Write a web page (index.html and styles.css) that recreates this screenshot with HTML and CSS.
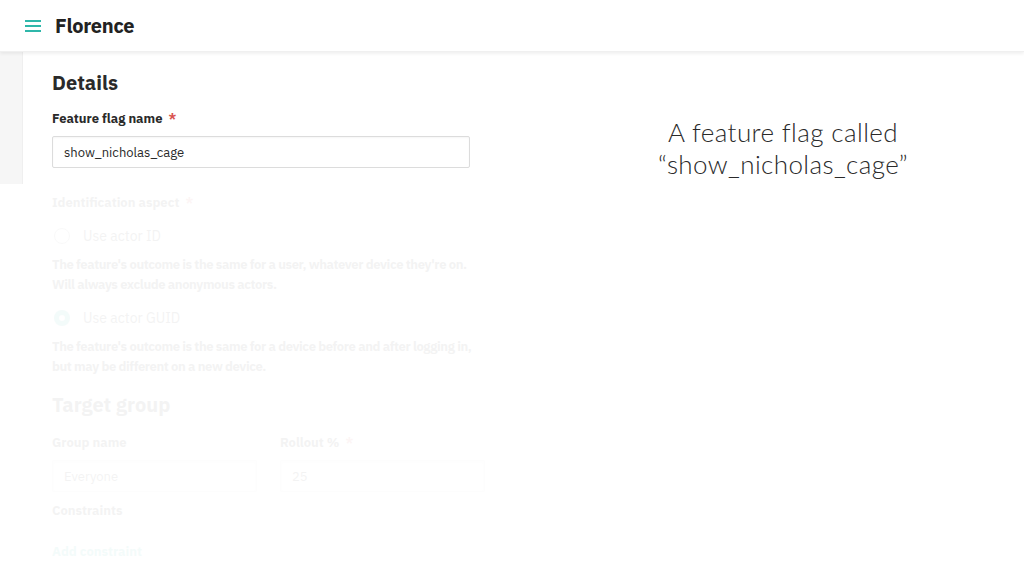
FILE: index.html
```html
<!DOCTYPE html>
<html lang="en">
<head>
  <meta charset="UTF-8" />
  <title>Florence - Feature flag</title>
  <link rel="stylesheet" href="styles.css">
</head>
<body>

  <header class="topbar">
    <svg class="menu-icon" width="16" height="12" viewBox="0 0 16 12">
      <rect x="0" y="0" width="16" height="2" />
      <rect x="0" y="5" width="16" height="2" />
      <rect x="0" y="10" width="16" height="2" />
    </svg>
    <span class="brand">Florence</span>
  </header>

  <div class="slide">
    <div class="app">
      <div class="top-part">
        <div class="sidebar"></div>
        <div class="content">
          <h2>Details</h2>
          <label class="field-label">Feature flag name <span class="req">*</span></label>
          <div class="text-input wide">show_nicholas_cage</div>
        </div>
      </div>

      <div class="faded">
        <div class="content">
          <label class="field-label">Identification aspect <span class="req">*</span></label>
          <div class="radio-row"><span class="radio"></span>Use actor ID</div>
          <p class="hint">The feature's outcome is the same for a user, whatever device they're on.<br>Will always exclude anonymous actors.</p>
          <div class="radio-row"><span class="radio checked"></span>Use actor GUID</div>
          <p class="hint">The feature's outcome is the same for a device before and after logging in,<br>but may be different on a new device.</p>

          <h2 class="target">Target group</h2>
          <div class="group-row">
            <div class="group-col">
              <label class="field-label">Group name</label>
              <div class="text-input">Everyone</div>
            </div>
            <div class="group-col">
              <label class="field-label">Rollout % <span class="req">*</span></label>
              <div class="text-input">25</div>
            </div>
          </div>
          <label class="field-label">Constraints</label>
          <a class="add-link">Add constraint</a>
        </div>
      </div>
    </div>

    <div class="caption">
      <p>A feature flag called<br>“show_nicholas_cage”</p>
    </div>
  </div>

</body>
</html>
```

FILE: styles.css
```css
body {
  margin: 0;
  font-family: "IBM Plex Sans", Roboto, "Noto Sans", sans-serif;
  color: #2a2a2a;
  background: #fff;
  width: 1024px;
  height: 576px;
  overflow: hidden;
}

.topbar {
  height: 52px;
  display: flex;
  align-items: center;
  padding-left: 25px;
  gap: 14px;
  box-shadow: 0 2px 3px rgba(0,0,0,0.06);
  border-bottom: 1px solid #f0f0f0;
  box-sizing: border-box;
  position: relative;
  z-index: 1;
}

.menu-icon {
  fill: #2fb7aa;
  margin-top: 1px;
}

.brand {
  font-size: 20px;
  font-weight: 700;
  letter-spacing: -0.3px;
  color: #222;
}

.slide {
  display: grid;
  grid-template-columns: 542px 1fr;
}

.top-part {
  display: flex;
  height: 132px;
}

.sidebar {
  width: 22px;
  background: #f6f6f6;
  border-right: 1px solid #efefef;
}

.top-part .content {
  padding-left: 29px;
}

.content {
  padding-left: 52px;
  width: 418px;
}

h2 {
  font-size: 20px;
  font-weight: 700;
  margin: 17px 0 14px;
  color: #2a2a2a;
}

.field-label {
  display: block;
  font-size: 13px;
  font-weight: 700;
  margin-bottom: 9px;
}

.req {
  color: #d9534f;
  margin-left: 3px;
}

.text-input {
  height: 32px;
  box-sizing: border-box;
  border: 1px solid #dcdcdc;
  border-radius: 2px;
  padding: 0 11px;
  font-size: 13px;
  display: flex;
  align-items: center;
  box-shadow: inset 0 1px 2px rgba(0,0,0,0.04);
}

.faded {
  opacity: 0.05;
  padding-top: 10px;
  height: 392px;
  box-sizing: border-box;
  overflow: hidden;
}

.radio-row {
  display: flex;
  align-items: center;
  gap: 13px;
  font-size: 14px;
  margin: 16px 0 10px 2px;
}

.hint + .radio-row {
  margin-top: 14px;
}

.radio {
  width: 14px;
  height: 14px;
  border: 1px solid #999;
  border-radius: 50%;
}

.radio.checked {
  border: 5px solid #2fb7aa;
  width: 6px;
  height: 6px;
}

.hint {
  font-size: 13px;
  font-weight: 700;
  line-height: 20px;
  margin: 0;
  white-space: nowrap;
  letter-spacing: -0.4px;
}

.target {
  margin-top: 14px;
  margin-bottom: 16px;
}

.group-row {
  display: flex;
  gap: 23px;
}

.group-col {
  width: 205px;
  flex-shrink: 0;
}

.group-col .text-input {
  margin-bottom: 10px;
}

.add-link {
  display: block;
  margin-top: 24px;
  font-size: 13px;
  font-weight: 700;
  color: #2fb7aa;
}

.caption {
  text-align: center;
  padding-top: 64px;
}

.caption p {
  margin: 0;
  font-family: Lato, "Open Sans", sans-serif;
  font-weight: 300;
  font-size: 26px;
  line-height: 32px;
  letter-spacing: 0.4px;
  color: #2a2a2a;
}
```
